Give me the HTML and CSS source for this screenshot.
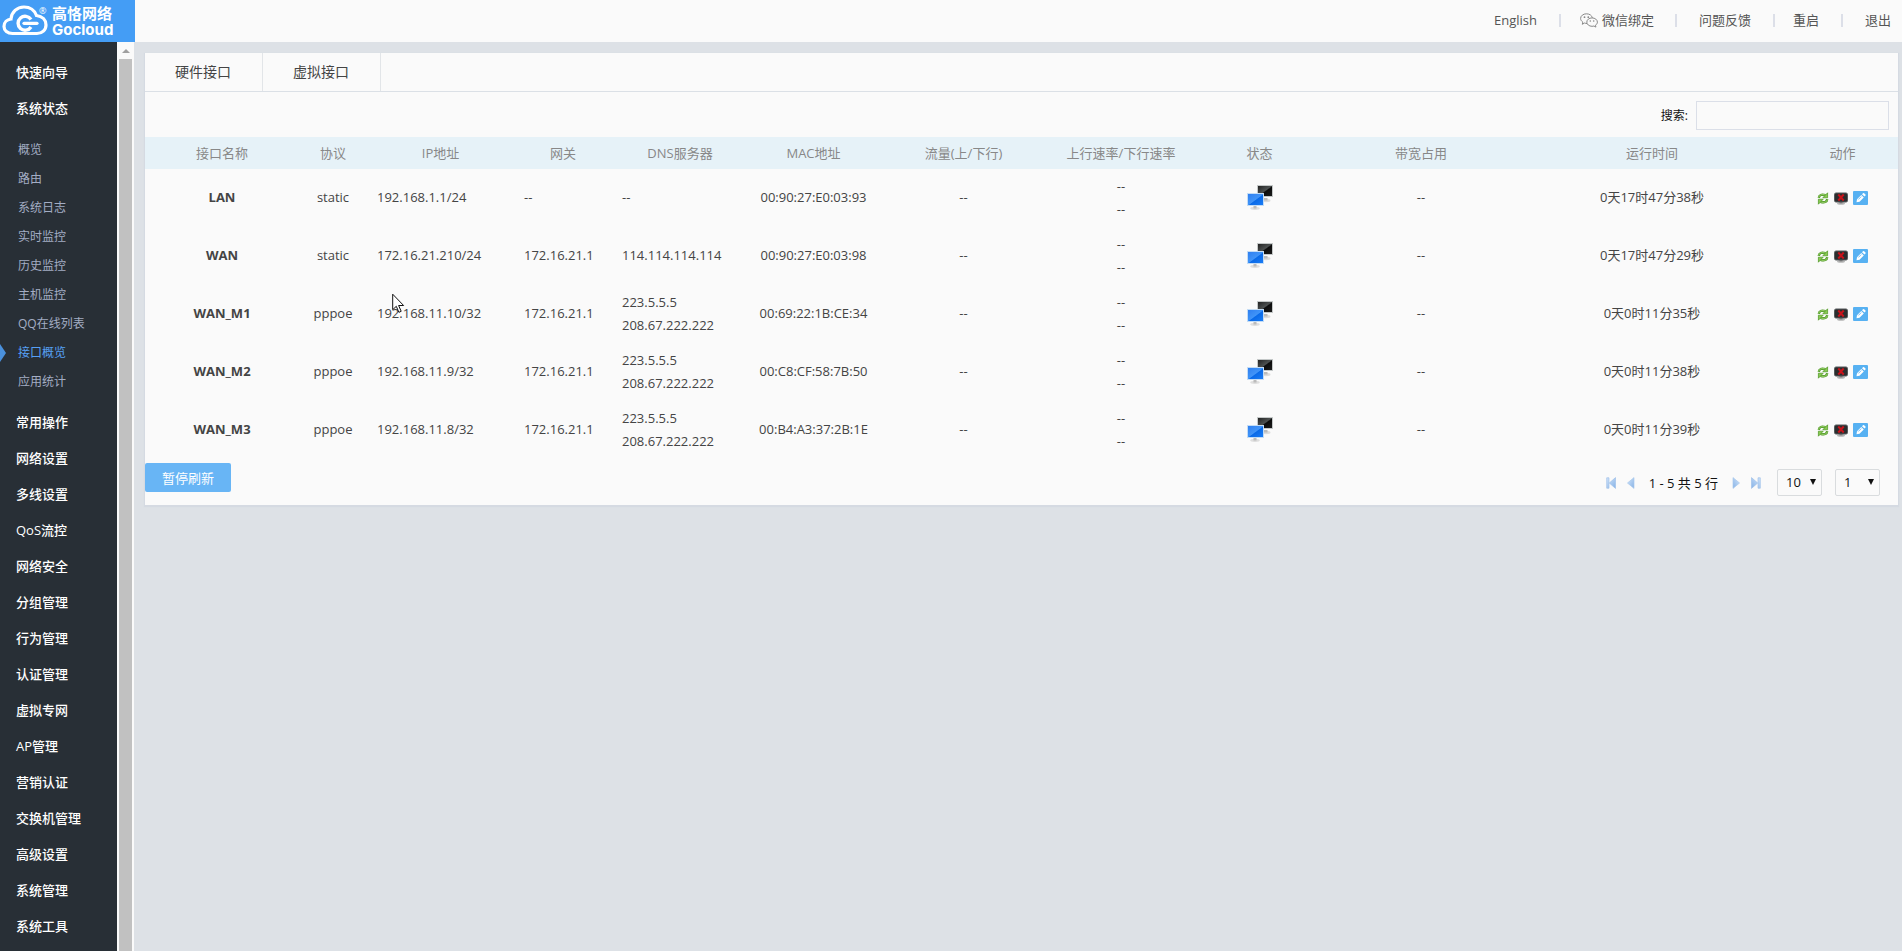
FILE: index.html
```
<!DOCTYPE html>
<html lang="zh-CN">
<head>
<meta charset="utf-8">
<title>接口概览</title>
<link rel="stylesheet" href="styles.css">
</head>
<body>
<svg class="sprites" aria-hidden="true">
  <defs>
    <linearGradient id="blue" x1="0" y1="0" x2="1" y2="1"><stop offset="0" stop-color="#2f7ff0"/><stop offset=".5" stop-color="#4094f8"/><stop offset=".55" stop-color="#0a6ae8"/><stop offset="1" stop-color="#1a7cf5"/></linearGradient>
    <linearGradient id="dark" x1="0" y1="0" x2="1" y2="1"><stop offset="0" stop-color="#222"/><stop offset=".48" stop-color="#4c5050"/><stop offset=".55" stop-color="#0c0c0c"/><stop offset="1" stop-color="#1c1c1c"/></linearGradient>
    <linearGradient id="pg" x1="0" y1="0" x2="1" y2="1"><stop offset="0" stop-color="#d2e5fa"/><stop offset="1" stop-color="#86b2e6"/></linearGradient>
    <symbol id="i-state" viewBox="0 0 28 26">
      <ellipse cx="20" cy="15.500" rx="4.500" ry="1.700" fill="#dcdcdc"/><path d="M18 13h3.500v2.500H18z" fill="#bbb"/>
      <rect x="11" y="0" width="16" height="12" fill="#c4c8c8"/><rect x="12" y="1" width="14" height="10" fill="url(#dark)"/>
      <ellipse cx="9" cy="23.300" rx="4.800" ry="1.600" fill="#dedede"/><path d="M7.500 21h3v2.500h-3z" fill="#bbb"/>
      <rect x="1" y="8" width="17" height="13" fill="#c3dcf5"/><rect x="2" y="9" width="15" height="11" fill="url(#blue)"/>
    </symbol>
    <symbol id="i-refresh" viewBox="0 0 12 13">
      <g fill="none" stroke="#4a9420" stroke-width="2.400"><path d="M1.800 5.800C2 3 4.500 2 8.500 3.200"/><path d="M10.200 7.200C10 10 7.500 11 3.500 9.800"/></g>
      <g fill="none" stroke="#a9dd7c" stroke-width="1"><path d="M1.800 5.400C2 3 4.500 2 8.500 3.200"/><path d="M10.200 7.600C10 10 7.500 11 3.500 9.800"/></g>
      <path d="M10.600.8v5H5.800zM1.400 12.200v-5h4.800z" fill="#8acb52" stroke="#4a9420" stroke-width=".7"/>
    </symbol>
    <symbol id="i-off" viewBox="0 0 14 13">
      <ellipse cx="7" cy="11.500" rx="4" ry="1.300" fill="#b5b5b5"/><path d="M5.500 9h3v2.500h-3z" fill="#888"/>
      <rect x=".5" y="1" width="13" height="9" rx="1.500" fill="#2b2d2e" stroke="#55595a"/>
      <path d="M4.300 2.500l5.400 6M9.700 2.500l-5.400 6" stroke="#c9121a" stroke-width="2"/>
    </symbol>
    <symbol id="i-edit" viewBox="0 0 15 14">
      <rect width="15" height="14" rx="1" fill="#57b1f2"/>
      <path d="M3.500 11.200l.5-3 4.300-4.300 2.500 2.500-4.300 4.300zM9 3.200l1-1q.6-.4 1.100 0l1.400 1.400q.4.500 0 1l-1 1z" fill="#fff"/>
      <path d="M5.300 8.500l3-3" stroke="#57b1f2" stroke-width=".8"/>
    </symbol>
    <symbol id="i-prev" viewBox="0 0 10 12"><path d="M8 .6v10.800L1.500 6z" fill="url(#pg)" stroke="#a9c8ec" stroke-width=".7"/></symbol>
    <symbol id="i-first" viewBox="0 0 10 12"><path d="M.7.800h2.300v10.400H.7zM9.500.6v10.800L3.300 6z" fill="url(#pg)" stroke="#a0c2ea" stroke-width=".7"/></symbol>
  </defs>
</svg>

<header class="topbar">
  <a class="logo" href="#">
    <svg class="logo-mark" viewBox="0 0 46 32" aria-hidden="true">
      <path d="M10.500 28.500C5.500 28.500 2 25.500 2 21.500c0-4 3-7 7-7.500C9.500 7 15 2 22 2c6 0 10.500 3.300 12.500 8.500 6 .8 9.500 4.500 9.500 9.500 0 5-4 8.500-9 8.500z" fill="none" stroke="#fff" stroke-width="3.200"/>
      <path d="M29 14.500a7 7 0 1 0 0 7.500" fill="none" stroke="#fff" stroke-width="3.400"/>
      <path d="M22 18.300h13" stroke="#fff" stroke-width="3.200" stroke-linecap="round"/>
    </svg>
    <span class="logo-reg">®</span>
    <span class="logo-text"><span class="logo-cn">高恪网络</span><span class="logo-en">Gocloud</span></span>
  </a>
  <nav class="toplinks">
    <a href="#">English</a>
    <a href="#" class="wx"><svg class="wx-icon" viewBox="0 0 18 15" aria-hidden="true"><g fill="none" stroke="#888" stroke-width="1"><path d="M7 10.500q-1.300 0-2.500-.5L2.300 11.300l.5-2.200C1.400 8 .6 6.900.6 5.500.6 2.800 3.200.8 6.500.8c3 0 5.400 1.700 5.900 4"/><path d="M12 4.900c-2.900 0-5.200 1.900-5.200 4.200s2.300 4.200 5.200 4.200q1 0 1.900-.3l2 1.100-.4-1.900c1.200-.8 1.900-1.900 1.900-3.100 0-2.300-2.400-4.200-5.400-4.200z"/></g><g fill="#888"><circle cx="4.500" cy="4.200" r=".9"/><circle cx="8.300" cy="4.200" r=".9"/><circle cx="10.300" cy="8" r=".8"/><circle cx="13.700" cy="8" r=".8"/></g></svg>微信绑定</a>
    <a href="#">问题反馈</a>
    <a href="#" class="short">重启</a>
    <a href="#">退出</a>
  </nav>
</header>

<div class="body">
  <nav class="sidebar">
    <ul class="menu">
      <li><a href="#">快速向导</a></li>
      <li><a href="#">系统状态</a>
        <ul class="submenu">
          <li><a href="#">概览</a></li>
          <li><a href="#">路由</a></li>
          <li><a href="#">系统日志</a></li>
          <li><a href="#">实时监控</a></li>
          <li><a href="#">历史监控</a></li>
          <li><a href="#">主机监控</a></li>
          <li><a href="#">QQ在线列表</a></li>
          <li><a href="#" class="active">接口概览</a></li>
          <li><a href="#">应用统计</a></li>
        </ul>
      </li>
      <li><a href="#">常用操作</a></li>
      <li><a href="#">网络设置</a></li>
      <li><a href="#">多线设置</a></li>
      <li><a href="#">QoS流控</a></li>
      <li><a href="#">网络安全</a></li>
      <li><a href="#">分组管理</a></li>
      <li><a href="#">行为管理</a></li>
      <li><a href="#">认证管理</a></li>
      <li><a href="#">虚拟专网</a></li>
      <li><a href="#">AP管理</a></li>
      <li><a href="#">营销认证</a></li>
      <li><a href="#">交换机管理</a></li>
      <li><a href="#">高级设置</a></li>
      <li><a href="#">系统管理</a></li>
      <li><a href="#">系统工具</a></li>
    </ul>
  </nav>
  <div class="scrollbar" aria-hidden="true"><span class="scroll-up"></span><span class="scroll-thumb"></span></div>

  <main class="content">
    <section class="panel">
      <div class="tabs"><a href="#">硬件接口</a><a href="#">虚拟接口</a></div>
      <div class="search"><label for="q">搜索:</label><input id="q" type="text"></div>
      <table class="grid">
        <colgroup><col class="c-name"><col class="c-proto"><col class="c-ip"><col class="c-gw"><col class="c-dns"><col class="c-mac"><col class="c-flow"><col class="c-rate"><col class="c-state"><col class="c-band"><col class="c-time"><col class="c-act"></colgroup>
        <thead>
          <tr><th>接口名称</th><th>协议</th><th>IP地址</th><th>网关</th><th>DNS服务器</th><th>MAC地址</th><th>流量(上/下行)</th><th>上行速率/下行速率</th><th>状态</th><th>带宽占用</th><th>运行时间</th><th>动作</th></tr>
        </thead>
        <tbody id="rows"></tbody>
      </table>
      <div class="footer">
        <button class="pause" type="button">暂停刷新</button>
        <div class="pager">
          <button type="button" aria-label="首页"><svg><use href="#i-first"/></svg></button>
          <button type="button" aria-label="上一页"><svg><use href="#i-prev"/></svg></button>
          <span class="range">1 - 5 共 5 行</span>
          <button type="button" aria-label="下一页" class="flip"><svg><use href="#i-prev"/></svg></button>
          <button type="button" aria-label="末页" class="flip"><svg><use href="#i-first"/></svg></button>
          <span class="pick"><select aria-label="每页行数"><option>10</option></select></span>
          <span class="pick"><select aria-label="页码"><option>1</option></select></span>
        </div>
      </div>
    </section>
  </main>
</div>
<svg class="cursor" viewBox="0 0 13 21" aria-hidden="true"><path d="M.7 1.200v15.500l3.600-3.400 2.600 6 2.300-1-2.600-5.800h5z" fill="#fff" stroke="#111" stroke-width="1"/></svg>
<script src="rows.js"></script>
</body>
</html>
```
FILE: styles.css
```
* { box-sizing: border-box; }
html, body { height: 100%; }
body {
  margin: 0;
  display: flex;
  flex-direction: column;
  overflow: hidden;
  background: #dde1e6;
  color: #444;
  font: 13px/20px "Open Sans", "Noto Sans CJK SC", sans-serif;
}
a { color: inherit; text-decoration: none; }
ul { margin: 0; padding: 0; list-style: none; }
button { border: 0; padding: 0; background: none; font: inherit; cursor: pointer; }
.sprites { position: absolute; width: 0; height: 0; }

.topbar { display: flex; flex: none; justify-content: space-between; height: 42px; background: #fafafa; }
.logo { display: flex; width: 135px; padding: 5px 0 0 2px; background: #449df5; color: #fff; }
.logo-mark { width: 46px; height: 32px; }
.logo-reg { margin-left: -9px; width: 13px; font-size: 9px; line-height: 12px; }
.logo-text { display: flex; flex-direction: column; font-weight: 700; }
.logo-cn { font-size: 15px; line-height: 17px; white-space: nowrap; }
.logo-en { font: 700 15px/16px "Inter", sans-serif; }

.toplinks { display: flex; align-items: center; padding: 0 11px 2px 0; color: #555; }
.toplinks a { display: flex; align-items: center; }
.toplinks a + a::before { content: ""; width: 2px; height: 13px; margin: 0 22px; background: #dcdfe8; }
.toplinks .wx::before { margin: 0 19px 0 22px; }
.toplinks .wx + a::before { margin: 0 22px 0 21px; }
.toplinks .short::before { margin-right: 18px; }
.wx-icon { width: 18px; height: 15px; margin-right: 4px; }

.body { display: flex; flex: 1; min-height: 0; }
.sidebar { flex: none; width: 117px; overflow: hidden; background: #282f36; }
.menu { padding-top: 12px; color: #fff; font-weight: 500; }
.menu > li > a { display: block; padding-left: 16px; line-height: 36px; }
.submenu { padding: 9px 0 8px; color: #a3adc4; font-size: 12px; font-weight: 400; }
.submenu a { position: relative; display: block; padding-left: 18px; line-height: 29px; }
.submenu .active { color: #56a0f5; }
.submenu .active::before {
  content: "";
  position: absolute;
  left: 0;
  top: 6px;
  border: solid transparent;
  border-width: 9px 0 9px 6px;
  border-left-color: #4a90dc;
}

.scrollbar { display: flex; flex: none; flex-direction: column; align-items: center; width: 17px; background: #fafafa; }
.scroll-up { height: 4px; margin-top: 7px; border: 4px solid transparent; border-top: 0; border-bottom-color: #a0a0a0; }
.scroll-thumb { flex: 1; width: 13px; margin-top: 6px; background: #c1c1c1; }

.content { flex: 1; min-width: 0; padding: 11px 4px 0 11px; }
.panel { background: #fafafa; box-shadow: 0 1px 1px 1px #d5dae2; }
.tabs { display: flex; height: 39px; border-bottom: 1px solid #dbe0e6; font-size: 14px; line-height: 38px; }
.tabs a { width: 118px; padding-right: 1px; border-right: 1px solid #e2e5e8; text-align: center; }
.search { display: flex; align-items: center; justify-content: flex-end; gap: 8px; height: 45px; padding: 2px 9px 0 0; color: #111; font-size: 12px; }
.search input { width: 193px; height: 29px; padding: 0 6px; border: 1px solid #dbdfe8; background: #fafafa; font: inherit; }

.grid { width: 100%; table-layout: fixed; border-collapse: collapse; }
.c-name { width: 154px; }
.c-proto { width: 68px; }
.c-ip { width: 147px; }
.c-gw { width: 98px; }
.c-dns { width: 136px; }
.c-mac { width: 131px; }
.c-flow { width: 169px; }
.c-rate { width: 146px; }
.c-state { width: 131px; }
.c-band { width: 192px; }
.c-time { width: 270px; }
.c-act { width: 111px; }
.grid th { height: 32px; padding: 0; background: #e6f2f8; color: #888; font-weight: 400; }
.grid td { height: 58px; padding: 0 0 1px; line-height: 23px; text-align: center; white-space: nowrap; }
.grid td.left { padding-left: 10px; text-align: left; }
.grid td.name { font-weight: 700; }
.state { display: block; width: 28px; height: 26px; margin: 0 auto; }
.actions { display: flex; align-items: center; justify-content: center; gap: 5px; padding-top: 1px; }
.actions svg { display: block; width: 14px; height: 13px; }
.actions .edit svg { width: 15px; height: 14px; }
.actions .refresh svg { width: 12px; }

.footer { display: flex; align-items: flex-start; justify-content: space-between; padding: 4px 18px 9px 0; }
.pause { width: 86px; height: 29px; border-radius: 2px; background: #68b5f5; color: #fff; }
.pager { display: flex; align-items: center; gap: 10px; padding-top: 6px; color: #111; }
.pager button svg { display: block; width: 10px; height: 12px; }
.pager .flip svg { transform: scaleX(-1); }
.range { padding: 0 3px; }
.pick { position: relative; margin-left: 6px; }
.pick + .pick { margin-left: 3px; }
.pick select { appearance: none; display: block; width: 45px; height: 27px; padding: 0 8px 1px; border: 1px solid #d9dcde; border-radius: 2px; background: #fafafa; color: #111; font: inherit; }
.pick::after { content: ""; position: absolute; right: 6px; top: 10px; border: 3px solid transparent; border-top: 6px solid #111; border-bottom: 0; pointer-events: none; }

.cursor { position: absolute; left: 392px; top: 293px; width: 13px; height: 21px; pointer-events: none; }
```
FILE: rows.js
```
const rows = [
  ["LAN", "static", "192.168.1.1/24", "--", "--", "00:90:27:E0:03:93", "0天17时47分38秒"],
  ["WAN", "static", "172.16.21.210/24", "172.16.21.1", "114.114.114.114", "00:90:27:E0:03:98", "0天17时47分29秒"],
  ["WAN_M1", "pppoe", "192.168.11.10/32", "172.16.21.1", "223.5.5.5<br>208.67.222.222", "00:69:22:1B:CE:34", "0天0时11分35秒"],
  ["WAN_M2", "pppoe", "192.168.11.9/32", "172.16.21.1", "223.5.5.5<br>208.67.222.222", "00:C8:CF:58:7B:50", "0天0时11分38秒"],
  ["WAN_M3", "pppoe", "192.168.11.8/32", "172.16.21.1", "223.5.5.5<br>208.67.222.222", "00:B4:A3:37:2B:1E", "0天0时11分39秒"]
];
document.getElementById("rows").innerHTML = rows.map(([name, proto, ip, gw, dns, mac, time]) => `
  <tr>
    <td class="name">${name}</td><td>${proto}</td>
    <td class="left">${ip}</td><td class="left">${gw}</td><td class="left">${dns}</td>
    <td>${mac}</td><td>--</td><td>--<br>--</td>
    <td><svg class="state"><use href="#i-state"/></svg></td>
    <td>--</td><td>${time}</td>
    <td><div class="actions">
      <button type="button" class="refresh" aria-label="重连"><svg><use href="#i-refresh"/></svg></button>
      <button type="button" aria-label="断开"><svg><use href="#i-off"/></svg></button>
      <button type="button" class="edit" aria-label="编辑"><svg><use href="#i-edit"/></svg></button>
    </div></td>
  </tr>`).join("");
```
